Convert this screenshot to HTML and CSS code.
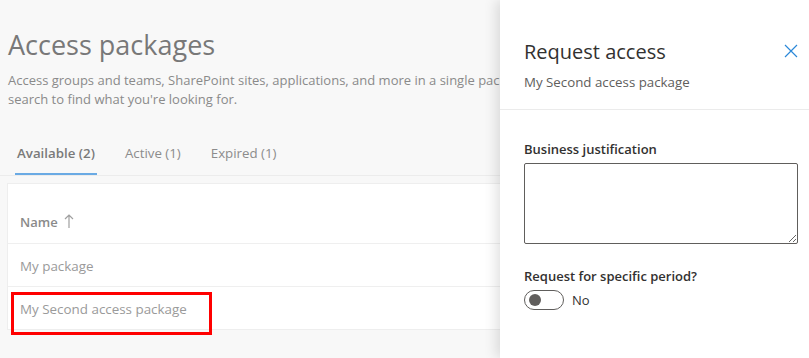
FILE: index.html
```html
<!DOCTYPE html>
<html lang="en">
<head>
    <meta charset="UTF-8">
    <meta name="viewport" content="width=device-width, initial-scale=1.0">
    <title>Access packages</title>
    <link rel="stylesheet" href="styles.css">
</head>
<body>

<div class="page">
    <main class="packages">
        <div class="packages-inner">
            <h1>Access packages</h1>
            <p class="intro">Access groups and teams, SharePoint sites, applications, and more in a single package. Use<br>search to find what you're looking for.</p>

            <nav class="tabs">
                <span class="tab active">Available (2)</span>
                <span class="tab">Active (1)</span>
                <span class="tab">Expired (1)</span>
            </nav>

            <div class="list">
                <div class="list-head">
                    Name
                    <svg class="sort-icon" width="10" height="15" viewBox="0 0 10 15">
                        <path d="M5 1 V14 M1 5 L5 1 L9 5" fill="none" stroke="#a0a0a0" stroke-width="1.2"/>
                    </svg>
                </div>
                <div class="list-row">My package</div>
                <div class="list-row">
                    My Second access package
                    <span class="highlight"></span>
                </div>
            </div>
        </div>
    </main>

    <aside class="panel">
        <div class="panel-header">
            <div>
                <h2>Request access</h2>
                <p class="panel-sub">My Second access package</p>
            </div>
            <svg class="close" width="14" height="14" viewBox="0 0 14 14">
                <path d="M1 1 L13 13 M13 1 L1 13" stroke="#2b88d8" stroke-width="1.2"/>
            </svg>
        </div>

        <div class="panel-body">
            <label class="field-label" for="justification">Business justification</label>
            <textarea id="justification" class="field-text"></textarea>

            <div class="field-label period">Request for specific period?</div>
            <div class="toggle-row">
                <span class="toggle"><span class="knob"></span></span>
                <span class="toggle-text">No</span>
            </div>
        </div>
    </aside>
</div>

</body>
</html>
```

FILE: styles.css
```css
* {
    margin: 0;
    padding: 0;
    box-sizing: border-box;
}

body {
    font-family: 'Open Sans', 'Noto Sans', sans-serif;
    background: #f8f8f8;
    color: #333;
    width: 809px;
    height: 358px;
    overflow: hidden;
}

.page {
    display: flex;
    height: 358px;
}

/* left side, dimmed behind the panel */
.packages {
    flex: 0 0 500px;
    overflow: hidden;
    background: #f8f8f8;
}

.packages-inner {
    width: 780px;
    padding-top: 27px;
}

h1 {
    font-size: 27px;
    font-weight: 400;
    color: #787878;
    margin-left: 8px;
    line-height: 36px;
}

.intro {
    font-size: 13px;
    line-height: 19px;
    color: #8a8a8a;
    margin: 8px 0 0 8px;
}

.tabs {
    display: flex;
    margin-top: 28px;
    padding-left: 15px;
    border-bottom: 1px solid #ececec;
}

.tab {
    font-size: 13.3px;
    color: #8c8c8c;
    padding: 7px 2px 11px;
    margin-right: 26px;
    border-bottom: 2px solid transparent;
}

.tab.active {
    font-weight: 600;
    color: #7a7a7a;
    border-bottom-color: #6aaae4;
}

.list {
    margin: 7px 0 0 7px;
    background: #fff;
    border: 1px solid #eee;
}

.list-head {
    display: flex;
    align-items: center;
    gap: 6px;
    height: 60px;
    padding: 16px 0 0 12px;
    font-size: 13px;
    font-weight: 600;
    color: #8a8a8a;
    border-bottom: 1px solid #efefef;
}

.list-row {
    position: relative;
    height: 43px;
    line-height: 45px;
    padding-left: 12px;
    font-size: 13.4px;
    color: #9a9a9a;
    border-bottom: 1px solid #efefef;
}

.list-row:last-child {
    border-bottom: none;
    height: 42px;
}

.highlight {
    position: absolute;
    left: 3px;
    top: 5px;
    width: 201px;
    height: 43px;
    border: 3px solid #f00;
}

/* request panel */
.panel {
    position: relative;
    flex: 1;
    background: #fff;
    box-shadow: -4px 0 12px rgba(0, 0, 0, 0.12);
}

.panel-header {
    display: flex;
    justify-content: space-between;
    align-items: flex-start;
    padding: 38px 11px 0 24px;
    height: 110px;
    border-bottom: 1px solid #ebebeb;
}

h2 {
    font-size: 20px;
    font-weight: 400;
    color: #323130;
    line-height: 28px;
}

.close {
    margin-top: 6px;
}

.panel-sub {
    font-size: 13.3px;
    color: #605e5c;
    margin-top: 7px;
}

.panel-body {
    padding: 29px 11px 0 24px;
}

.field-label {
    display: block;
    font-size: 13px;
    font-weight: 600;
    color: #323130;
    line-height: 20px;
}

.field-text {
    display: block;
    width: 274px;
    height: 81px;
    margin-top: 4px;
    border: 1px solid #605e5c;
    border-radius: 2px;
    resize: vertical;
    font-family: inherit;
}

.period {
    margin-top: 22px;
}

.toggle-row {
    display: flex;
    align-items: center;
    gap: 8px;
    margin-top: 4px;
}

.toggle {
    display: flex;
    align-items: center;
    width: 40px;
    height: 20px;
    border: 1px solid #605e5c;
    border-radius: 10px;
    padding-left: 4px;
}

.knob {
    width: 12px;
    height: 12px;
    border-radius: 50%;
    background: #605e5c;
}

.toggle-text {
    font-size: 13px;
    color: #323130;
}
```
